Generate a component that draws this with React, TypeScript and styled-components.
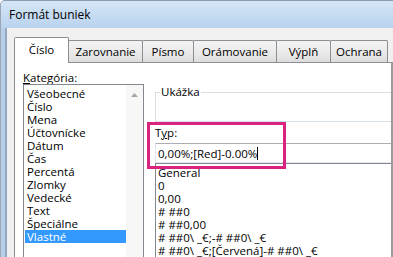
import React from "react";
import styled, { createGlobalStyle } from "styled-components";

const Global = createGlobalStyle`
  html, body { margin: 0; padding: 0; }
  body {
    width: 393px;
    height: 257px;
    overflow: hidden;
    font-family: "Open Sans", "Noto Sans", "Liberation Sans", sans-serif;
    font-size: 11.5px;
    color: #000;
  }
  * { box-sizing: border-box; }
`;

const Window = styled.div`
  width: 393px;
  height: 257px;
  display: flex;
  flex-direction: column;
  background: #b7cfe9;
  border-top: 1px solid #8a9cb0;
  border-left: 1px solid #9aa6b3;
  border-top-left-radius: 5px;
  overflow: hidden;
  padding-left: 4px;
`;

const TitleBar = styled.div`
  height: 27px;
  margin-left: -4px;
  padding-left: 8px;
  display: flex;
  align-items: center;
  flex-shrink: 0;
  background: linear-gradient(#d6e6f7, #c3daf1 60%, #bad3ee);
  font-size: 12px;
`;

const Body = styled.div`
  flex: 1;
  display: flex;
  flex-direction: column;
  background: #f0f0f0;
  border-left: 2px solid #93a9c2;
  padding: 9px 0 0 7px;
  min-height: 0;
`;

const TabRow = styled.div`
  display: flex;
  align-items: flex-end;
  height: 25px;
  position: relative;
  z-index: 1;
  flex-shrink: 0;
`;

const Tab = styled.div<{ $w: number; $active?: boolean }>`
  width: ${(p) => p.$w}px;
  height: ${(p) => (p.$active ? 26 : 22)}px;
  margin-bottom: ${(p) => (p.$active ? -1 : 0)}px;
  margin-left: -1px;
  &:first-child { margin-left: 0; }
  display: flex;
  align-items: center;
  justify-content: center;
  padding-bottom: ${(p) => (p.$active ? 2 : 0)}px;
  border: 1px solid #8c8e94;
  border-bottom: none;
  border-radius: 2px 2px 0 0;
  background: ${(p) =>
    p.$active ? "#ffffff" : "linear-gradient(#f3f3f3, #ebebeb 50%, #dddddd)"};
  position: relative;
  z-index: ${(p) => (p.$active ? 2 : 1)};
  white-space: nowrap;
`;

const Panel = styled.div`
  position: relative;
  width: 379px;
  flex: 1;
  background: #ffffff;
  border: 1px solid #8c8e94;
  border-right: 2px solid #9c9c9c;
  border-bottom: none;
  padding: 8px 0 0 8px;
  display: grid;
  grid-template-columns: 121px 1fr;
  column-gap: 11px;
  align-items: start;
`;

const Column = styled.div`
  display: flex;
  flex-direction: column;
  min-width: 0;
`;

const Label = styled.div`
  height: 13px;
  line-height: 13px;
  white-space: nowrap;
`;

const Key = styled.span`
  text-decoration: underline;
  text-underline-offset: 1px;
`;

const ListBox = styled.div`
  border: 1px solid #828790;
  border-bottom: none;
  display: flex;
  height: 200px;
  background: #fff;
`;

const Items = styled.div`
  flex: 1;
  padding: 2px 0 0 1px;
  display: flex;
  flex-direction: column;
`;

const Item = styled.div<{ $selected?: boolean }>`
  height: 13px;
  line-height: 13px;
  padding-left: 2px;
  white-space: nowrap;
  background: ${(p) => (p.$selected ? "#3399ff" : "transparent")};
  color: ${(p) => (p.$selected ? "#ffffff" : "#000000")};
`;

const ScrollBar = styled.div`
  width: 17px;
  background: #f7f7f7;
  display: flex;
  justify-content: center;
  padding-top: 8px;
`;

const GroupBox = styled.div`
  position: relative;
  margin-top: 21px;
  height: 30px;
  border: 1px solid #d5dfe5;
  border-right: none;
`;

const GroupTitle = styled.span`
  position: absolute;
  top: -8px;
  left: 4px;
  padding: 0 1px;
  background: #fff;
  line-height: 14px;
`;

const TypLabel = styled(Label)`
  margin-top: 4px;
`;

const Input = styled.div`
  margin-top: 4px;
  height: 20px;
  border: 1px solid #abadb3;
  border-left-color: #e2e3ea;
  border-right: none;
  border-bottom-color: #e3e9ef;
  padding-left: 2px;
  display: flex;
  align-items: center;
  white-space: nowrap;
`;

const Caret = styled.span`
  display: inline-block;
  width: 1px;
  height: 13px;
  background: #000;
`;

const TypeList = styled.div`
  height: 100px;
  border-top: 1px solid #828790;
  border-left: 1px solid #828790;
  padding-top: 2px;
  display: flex;
  flex-direction: column;
`;

const Highlight = styled.div`
  position: absolute;
  left: 132px;
  top: 59px;
  width: 139px;
  height: 47px;
  border: 3px solid #d9237f;
  pointer-events: none;
`;

const categories = [
  "Všeobecné",
  "Číslo",
  "Mena",
  "Účtovnícke",
  "Dátum",
  "Čas",
  "Percentá",
  "Zlomky",
  "Vedecké",
  "Text",
  "Špeciálne",
  "Vlastné",
];

const formats = [
  "General",
  "0",
  "0,00",
  "# ##0",
  "# ##0,00",
  "# ##0\\ _€;-# ##0\\ _€",
  "# ##0\\ _€;[Červená]-# ##0\\ _€",
];

const tabs: { label: string; w: number }[] = [
  { label: "Číslo", w: 55 },
  { label: "Zarovnanie", w: 75 },
  { label: "Písmo", w: 52 },
  { label: "Orámovanie", w: 84 },
  { label: "Výplň", w: 55 },
  { label: "Ochrana", w: 58 },
];

export default function App() {
  return (
    <>
      <Global />
      <Window>
        <TitleBar>Formát buniek</TitleBar>
        <Body>
          <TabRow>
            {tabs.map((t, i) => (
              <Tab key={t.label} $w={t.w} $active={i === 0}>
                {t.label}
              </Tab>
            ))}
          </TabRow>
          <Panel>
            <Column>
              <Label>
                <Key>K</Key>ategória:
              </Label>
              <ListBox>
                <Items>
                  {categories.map((c) => (
                    <Item key={c} $selected={c === "Vlastné"}>
                      {c}
                    </Item>
                  ))}
                </Items>
                <ScrollBar>
                  <svg width="7" height="4" viewBox="0 0 7 4">
                    <path d="M0 4 L3.5 0 L7 4 Z" fill="#a6a6a6" />
                  </svg>
                </ScrollBar>
              </ListBox>
            </Column>
            <Column>
              <GroupBox>
                <GroupTitle>Ukážka</GroupTitle>
              </GroupBox>
              <TypLabel>
                T<Key>y</Key>p:
              </TypLabel>
              <Input>
                0,00%;[Red]-0.00%
                <Caret />
              </Input>
              <TypeList>
                {formats.map((f) => (
                  <Item key={f}>{f}</Item>
                ))}
              </TypeList>
            </Column>
            <Highlight />
          </Panel>
        </Body>
      </Window>
    </>
  );
}
